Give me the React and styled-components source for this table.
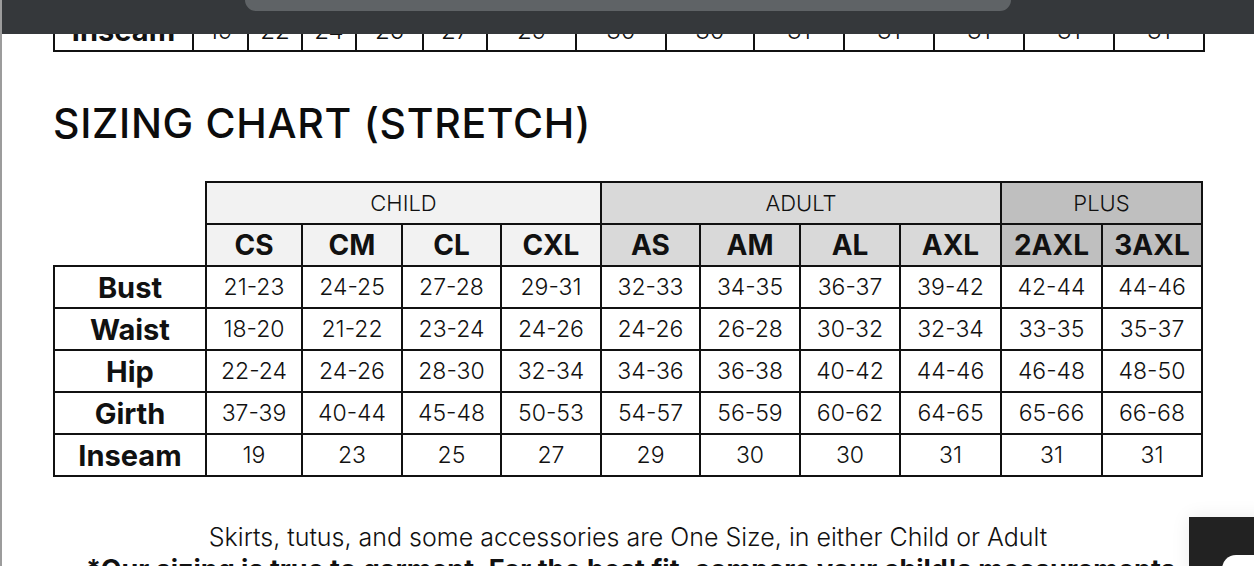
import React from "react";
import styled, { createGlobalStyle } from "styled-components";

const GlobalStyle = createGlobalStyle`
  html, body {
    margin: 0;
    padding: 0;
    background: #ffffff;
    overflow: hidden;
  }
  body {
    font-family: "Inter", "Liberation Sans", sans-serif;
    color: #111;
  }
`;

const Page = styled.div`
  width: 1254px;
  height: 566px;
  overflow: hidden;
  position: relative;
  border-left: 2px solid #9c9c9c;
  box-sizing: border-box;
`;

const TopBar = styled.div`
  height: 34px;
  background: #35383b;
  display: flex;
  justify-content: center;
`;

const Pill = styled.div`
  width: 766px;
  height: 11px;
  background: #5f6366;
  border-radius: 0 0 20px 20px;
`;

const Clip = styled.div`
  height: 18px;
  overflow: hidden;
  display: flex;
  align-items: flex-end;
  padding-left: 51px;
`;

const Table = styled.table`
  border-collapse: collapse;
  table-layout: fixed;
`;

const PrevCell = styled.td`
  border: 2px solid #111;
  height: 40px;
  padding: 0;
  text-align: center;
  font-weight: ${(p) => (p.$head ? 700 : 300)};
  font-size: ${(p) => (p.$head ? "29px" : "24px")};
`;

const Title = styled.h1`
  margin: 46px 0 0 51px;
  font-family: "Inter", sans-serif;
  font-weight: 500;
  font-size: 41px;
  letter-spacing: 0.7px;
  line-height: 50px;
  color: #0c0c0c;
`;

const ChartWrap = styled.div`
  margin-top: 33px;
  padding-left: 51px;
`;

const Blank = styled.td`
  border: none;
`;

const GroupCell = styled.td`
  border: 2px solid #111;
  height: 40px;
  padding: 0;
  text-align: center;
  font-size: 22px;
  font-weight: 300;
  background: ${(p) => p.$bg};
`;

const SizeCell = styled.td`
  border: 2px solid #111;
  height: 40px;
  padding: 0;
  text-align: center;
  font-size: 28px;
  font-weight: 700;
  background: ${(p) => p.$bg};
`;

const Label = styled.td`
  border: 2px solid #111;
  height: 40px;
  padding: 0;
  text-align: center;
  font-size: 29px;
  font-weight: 700;
`;

const Value = styled.td`
  border: 2px solid #111;
  height: 40px;
  padding: 0;
  text-align: center;
  font-size: 23px;
  font-weight: 300;
`;

const Note = styled.p`
  margin: 45px 0 0;
  text-align: center;
  font-size: 25px;
  font-weight: 300;
  line-height: 30px;
  padding-right: 0;
`;

const BoldNote = styled.p`
  margin: 2px 0 0;
  padding-left: 84px;
  font-size: 27px;
  font-weight: 700;
  line-height: 32px;
  white-space: nowrap;
`;

const ChatBox = styled.div`
  position: absolute;
  left: 1187px;
  top: 517px;
  width: 80px;
  height: 60px;
  background: #222222;
  box-shadow: 0 0 18px rgba(0, 0, 0, 0.08);
  &::after {
    content: "";
    position: absolute;
    left: 33px;
    top: 38px;
    width: 60px;
    height: 40px;
    border-radius: 14px 0 0 0;
    background: #ffffff;
  }
`;

const prevWidths = [139, 55, 54, 54, 67, 64, 89, 90, 88, 90, 90, 90, 90, 90];
const prevValues = ["19", "22", "24", "26", "27", "29", "30", "30", "31", "31", "31", "31", "31"];

const widths = [152, 96, 100, 99, 100, 99, 100, 100, 101, 101, 100];

const CHILD = "#f2f2f2";
const ADULT = "#d9d9d9";
const PLUS = "#bfbfbf";

const sizes = [
  ["CS", CHILD], ["CM", CHILD], ["CL", CHILD], ["CXL", CHILD],
  ["AS", ADULT], ["AM", ADULT], ["AL", ADULT], ["AXL", ADULT],
  ["2AXL", PLUS], ["3AXL", PLUS],
];

const rows = [
  ["Bust", ["21-23", "24-25", "27-28", "29-31", "32-33", "34-35", "36-37", "39-42", "42-44", "44-46"]],
  ["Waist", ["18-20", "21-22", "23-24", "24-26", "24-26", "26-28", "30-32", "32-34", "33-35", "35-37"]],
  ["Hip", ["22-24", "24-26", "28-30", "32-34", "34-36", "36-38", "40-42", "44-46", "46-48", "48-50"]],
  ["Girth", ["37-39", "40-44", "45-48", "50-53", "54-57", "56-59", "60-62", "64-65", "65-66", "66-68"]],
  ["Inseam", ["19", "23", "25", "27", "29", "30", "30", "31", "31", "31"]],
];

export default function App() {
  return (
    <>
      <GlobalStyle />
      <Page>
        <TopBar>
          <Pill />
        </TopBar>

        <Clip>
          <Table>
            <colgroup>
              {prevWidths.map((w, i) => (
                <col key={i} style={{ width: w }} />
              ))}
            </colgroup>
            <tbody>
              <tr>
                <PrevCell $head>Inseam</PrevCell>
                {prevValues.map((v, i) => (
                  <PrevCell key={i}>{v}</PrevCell>
                ))}
              </tr>
            </tbody>
          </Table>
        </Clip>

        <Title>SIZING CHART (STRETCH)</Title>

        <ChartWrap>
          <Table>
            <colgroup>
              {widths.map((w, i) => (
                <col key={i} style={{ width: w }} />
              ))}
            </colgroup>
            <tbody>
              <tr>
                <Blank />
                <GroupCell colSpan={4} $bg={CHILD}>CHILD</GroupCell>
                <GroupCell colSpan={4} $bg={ADULT}>ADULT</GroupCell>
                <GroupCell colSpan={2} $bg={PLUS}>PLUS</GroupCell>
              </tr>
              <tr>
                <Blank />
                {sizes.map(([s, bg]) => (
                  <SizeCell key={s} $bg={bg}>{s}</SizeCell>
                ))}
              </tr>
              {rows.map(([label, vals]) => (
                <tr key={label}>
                  <Label>{label}</Label>
                  {vals.map((v, i) => (
                    <Value key={i}>{v}</Value>
                  ))}
                </tr>
              ))}
            </tbody>
          </Table>
        </ChartWrap>

        <Note>Skirts, tutus, and some accessories are One Size, in either Child or Adult</Note>
        <BoldNote>*Our sizing is true to garment. For the best fit, compare your child's measurements</BoldNote>

        <ChatBox />
      </Page>
    </>
  );
}
